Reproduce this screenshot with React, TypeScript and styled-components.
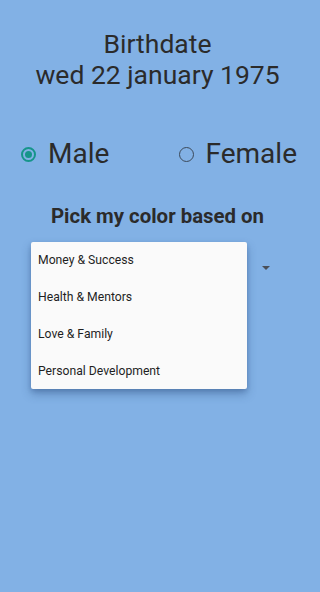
import React from "react";
import styled, { createGlobalStyle } from "styled-components";

const Global = createGlobalStyle`
  html, body { margin: 0; padding: 0; background: #82b1e5; }
  body { font-family: Roboto, "Noto Sans", sans-serif; color: #2b2b2b; }
`;

const Page = styled.div`
  width: 315px;
  height: 592px;
  background: #82b1e5;
  display: flex;
  flex-direction: column;
  align-items: stretch;
  overflow: hidden;
`;

const Title = styled.div`
  margin-top: 28px;
  text-align: center;
  font-size: 26.5px;
  line-height: 31px;
  font-weight: 400;
  color: #2b2b2b;
`;

const RadioRow = styled.div`
  margin-top: 47px;
  display: grid;
  grid-template-columns: 1fr 1fr;
  height: 34px;
`;

const RadioCell = styled.label`
  display: flex;
  align-items: center;
  padding-left: 21px;
  gap: 12px;
`;

const RadioCircle = styled.span<{ $checked: boolean }>`
  width: 15px;
  height: 15px;
  box-sizing: border-box;
  border-radius: 50%;
  border: ${(p) => (p.$checked ? "2px solid #16958a" : "1.5px solid #3c4a5a")};
  display: flex;
  align-items: center;
  justify-content: center;
  &::after {
    content: "";
    width: 7px;
    height: 7px;
    border-radius: 50%;
    background: #16958a;
    display: ${(p) => (p.$checked ? "block" : "none")};
  }
`;

const RadioText = styled.span`
  font-size: 28px;
  line-height: 34px;
  color: #2b2b2b;
`;

const Heading = styled.div`
  margin-top: 33px;
  text-align: center;
  font-size: 20.4px;
  line-height: 24px;
  font-weight: 700;
  color: #2b2b2b;
`;

const SelectWrap = styled.div`
  position: relative;
  margin: 14px 31px 0 31px;
  height: 52px;
  display: flex;
  align-items: center;
  justify-content: flex-end;
  padding-right: 14px;
`;

const Arrow = styled.span`
  width: 0;
  height: 0;
  border-left: 4px solid transparent;
  border-right: 4px solid transparent;
  border-top: 4px solid #4a4f58;
`;

const Menu = styled.div`
  position: absolute;
  left: 0;
  top: 0;
  width: 216px;
  height: 147px;
  background: #fafafa;
  border-radius: 2px;
  box-shadow: 0 5px 10px rgba(30, 60, 110, 0.35), 0 2px 4px rgba(30, 60, 110, 0.2);
  display: flex;
  flex-direction: column;
`;

const MenuItem = styled.div`
  flex: 1;
  display: flex;
  align-items: center;
  padding-left: 7px;
  font-size: 12.2px;
  color: #1f1f1f;
`;

const items = ["Money & Success", "Health & Mentors", "Love & Family", "Personal Development"];

export default function App() {
  return (
    <Page>
      <Global />
      <Title>
        Birthdate
        <br />
        wed 22 january 1975
      </Title>
      <RadioRow>
        <RadioCell>
          <RadioCircle $checked={true} />
          <RadioText>Male</RadioText>
        </RadioCell>
        <RadioCell>
          <RadioCircle $checked={false} />
          <RadioText>Female</RadioText>
        </RadioCell>
      </RadioRow>
      <Heading>Pick my color based on</Heading>
      <SelectWrap>
        <Arrow />
        <Menu>
          {items.map((t) => (
            <MenuItem key={t}>{t}</MenuItem>
          ))}
        </Menu>
      </SelectWrap>
    </Page>
  );
}
